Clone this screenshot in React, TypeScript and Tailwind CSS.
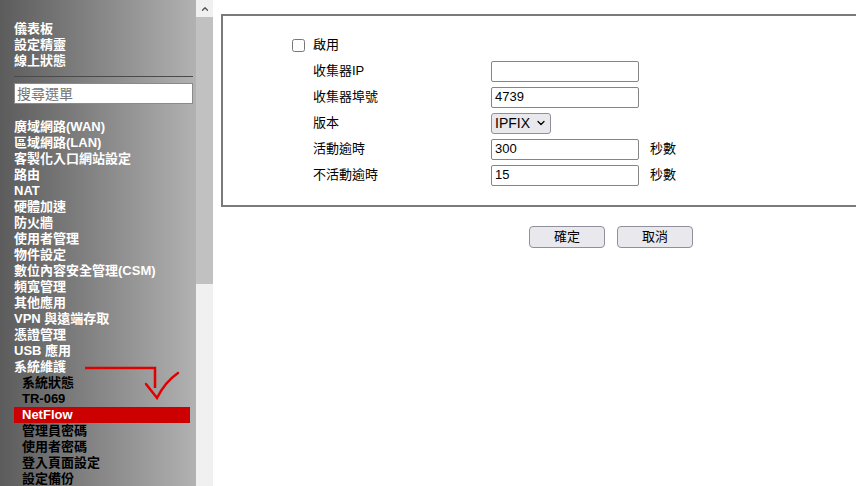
import { ChevronDown, ChevronUp } from 'lucide-react'

const font = { fontFamily: '"Liberation Sans", "Noto Sans CJK TC", sans-serif' }

const topItems = ['儀表板', '設定精靈', '線上狀態']
const menuItems = [
  '廣域網路(WAN)',
  '區域網路(LAN)',
  '客製化入口網站設定',
  '路由',
  'NAT',
  '硬體加速',
  '防火牆',
  '使用者管理',
  '物件設定',
  '數位內容安全管理(CSM)',
  '頻寬管理',
  '其他應用',
  'VPN 與遠端存取',
  '憑證管理',
  'USB 應用',
  '系統維護',
]
const subItems = ['系統狀態', 'TR-069', 'NetFlow', '管理員密碼', '使用者密碼', '登入頁面設定', '設定備份']

function Sidebar() {
  return (
    <div className="relative w-[196px] h-full shrink-0 bg-gradient-to-r from-[#5c5c5c] to-[#b2b2b2] pl-[14px] pt-[21px] text-[13px] font-bold leading-4">
      {topItems.map((t) => (
        <div key={t} className="text-white">{t}</div>
      ))}
      <div className="mt-[7px] mr-[3px] h-px bg-[#4a4a4a]" />
      <div className="mt-[6px] mr-[3px] h-[21px] bg-white border border-[#8a8a8a] flex items-center pl-[2px] text-[14px] font-normal text-[#757575]">
        搜尋選單
      </div>
      <div className="mt-[15px]">
        {menuItems.map((t) => (
          <div key={t} className="text-white">{t}</div>
        ))}
      </div>
      <div>
        {subItems.map((t) =>
          t === 'NetFlow' ? (
            <div key={t} className="bg-[#cc0000] text-white pl-2 mr-[6px]">{t}</div>
          ) : (
            <div key={t} className="text-black pl-2">{t}</div>
          )
        )}
      </div>
      <svg className="absolute left-0 top-0 pointer-events-none" width="196" height="486" viewBox="0 0 196 486">
        <path d="M85 368 H155 V388" fill="none" stroke="#e00000" strokeWidth="2.5" />
        <path d="M146 384 L157 398 Q165 382 178 373" fill="none" stroke="#e00000" strokeWidth="2.5" strokeLinecap="round" />
      </svg>
    </div>
  )
}

function Scrollbar() {
  return (
    <div className="w-[17px] h-full shrink-0 bg-[#f0f0f0] flex flex-col">
      <div className="h-[17px] flex items-center justify-center text-[#505050]">
        <ChevronUp size={10} strokeWidth={3} />
      </div>
      <div className="h-[267px] bg-[#c1c1c1]" />
    </div>
  )
}

function Row({ label, children, unit }: { label: string; children: React.ReactNode; unit?: string }) {
  return (
    <div className="flex items-center h-[26px]">
      <div className="w-[21px]" />
      <div className="w-[178px]">{label}</div>
      {children}
      {unit && <div className="ml-[11px]">{unit}</div>}
    </div>
  )
}

function TextBox({ value }: { value: string }) {
  return (
    <div className="w-[148px] h-[21px] border border-[#858585] rounded-[2px] bg-white flex items-center pl-[3px]">
      {value}
    </div>
  )
}

export default function App() {
  return (
    <div className="w-[856px] h-[486px] overflow-hidden flex bg-white text-[13px] text-black" style={font}>
      <Sidebar />
      <Scrollbar />
      <div className="w-[796px] shrink-0 pt-[14px]">
        <div className="ml-[8px] w-[780px] border-2 border-[#7a7a7a] pl-[69px] pt-[16px] pb-[17px]">
          <div className="flex items-center h-[26px]">
            <input type="checkbox" className="w-[13px] h-[13px] m-0" />
            <div className="ml-[8px]">啟用</div>
          </div>
          <Row label="收集器IP"><TextBox value="" /></Row>
          <Row label="收集器埠號"><TextBox value="4739" /></Row>
          <Row label="版本">
            <div className="w-[60px] h-[21px] border border-[#8f8f9d] rounded-[3px] bg-[#e9e9ed] flex items-center pl-[3px] gap-[5px] text-[14px]">
              IPFIX
              <ChevronDown size={12} strokeWidth={2.5} />
            </div>
          </Row>
          <Row label="活動逾時" unit="秒數"><TextBox value="300" /></Row>
          <Row label="不活動逾時" unit="秒數"><TextBox value="15" /></Row>
        </div>
        <div className="flex justify-center gap-[12px] mt-[19px]">
          <button className="w-[76px] h-[22px] border border-[#8f8f9d] rounded-[4px] bg-[#e9e9ed] text-[13px]">確定</button>
          <button className="w-[76px] h-[22px] border border-[#8f8f9d] rounded-[4px] bg-[#e9e9ed] text-[13px]">取消</button>
        </div>
      </div>
    </div>
  )
}
